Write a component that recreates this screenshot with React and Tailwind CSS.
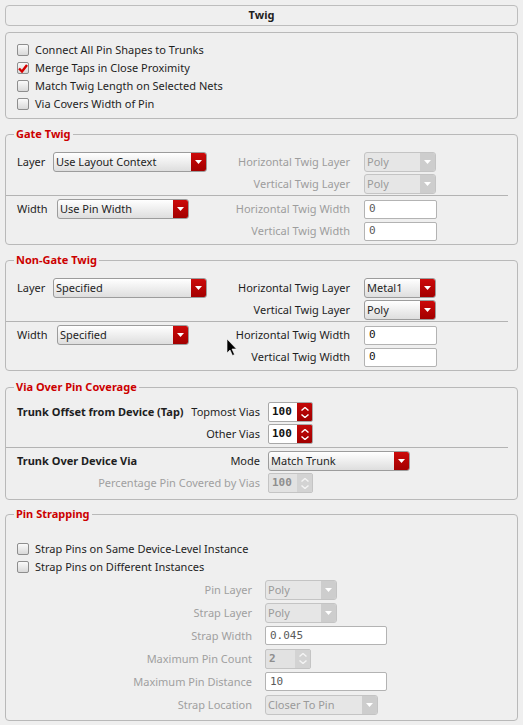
import React from "react";

function Arrow({ color = "#ffffff" }) {
  return (
    <svg width="7" height="4" viewBox="0 0 7 4">
      <polygon points="0,0 7,0 3.5,4" fill={color} />
    </svg>
  );
}

function Combo({ value, w, disabled }) {
  return (
    <div
      className={`h-[20px] flex items-stretch rounded-[3px] border overflow-hidden ${
        disabled
          ? "border-[#c4c4c4] bg-[#e6e6e6] text-[#9a9a9a]"
          : "border-[#9c9c9c] bg-gradient-to-b from-[#ffffff] to-[#dedede] text-[#1e1e1e]"
      }`}
      style={{ width: w }}
    >
      <div className="flex-1 pl-[2px] flex items-center whitespace-nowrap overflow-hidden">{value}</div>
      <div
        className={`w-[15px] flex items-center justify-center ${
          disabled ? "bg-[#cdcdcd]" : "bg-gradient-to-b from-[#cc0a0a] to-[#a30000]"
        }`}
      >
        <Arrow />
      </div>
    </div>
  );
}

function Field({ value, w, dim }) {
  return (
    <div
      className={`h-[19px] flex items-center pl-[4px] bg-white border border-[#b3b3b3] rounded-[2px] font-['DejaVu_Sans_Mono',monospace] text-[11px] ${
        dim ? "text-[#5a5a5a]" : "text-[#111]"
      }`}
      style={{ width: w }}
    >
      {value}
    </div>
  );
}

function Spin({ value, w = 45, disabled }) {
  const c = disabled ? "#f4f4f4" : "#ffffff";
  return (
    <div
      className={`h-[20px] flex items-stretch rounded-[2px] border overflow-hidden ${
        disabled ? "border-[#c4c4c4] bg-[#e2e2e2] text-[#8e8e8e]" : "border-[#a8a8a8] bg-white text-[#111]"
      }`}
      style={{ width: w }}
    >
      <div className="flex-1 pl-[3px] flex items-center font-['DejaVu_Sans_Mono',monospace] text-[11px] font-bold">
        {value}
      </div>
      <div
        className={`w-[15px] flex flex-col items-center justify-center gap-[3px] ${
          disabled ? "bg-[#d3d3d3]" : "bg-gradient-to-b from-[#c40808] to-[#a00000]"
        }`}
      >
        <svg width="8" height="4" viewBox="0 0 8 4">
          <polyline points="0.5,3.5 4,0.5 7.5,3.5" fill="none" stroke={c} strokeWidth="1.4" />
        </svg>
        <svg width="8" height="4" viewBox="0 0 8 4">
          <polyline points="0.5,0.5 4,3.5 7.5,0.5" fill="none" stroke={c} strokeWidth="1.4" />
        </svg>
      </div>
    </div>
  );
}

function Check({ label, checked }) {
  return (
    <div className="h-[18px] pl-[11px] flex items-center gap-[6px]">
      <div className="w-[12px] h-[12px] rounded-[2px] border border-[#8e8e8e] bg-gradient-to-b from-[#fafafa] to-[#d9d9d9] flex items-center justify-center">
        {checked && (
          <svg width="10" height="9" viewBox="0 0 10 9">
            <polyline points="1,4.5 4,7.5 9,1" fill="none" stroke="#d40000" strokeWidth="2.4" />
          </svg>
        )}
      </div>
      <span>{label}</span>
    </div>
  );
}

function Group({ title, className, children }) {
  return (
    <div className={`relative border border-[#b9b9b9] rounded-[4px] ${className}`}>
      <span className="absolute -top-[8px] left-[8px] px-[2px] bg-[#efefef] text-[#cc0000] font-bold leading-[14px]">
        {title}
      </span>
      {children}
    </div>
  );
}

function Sep({ className = "" }) {
  return <div className={`h-px bg-[#b3b3b3] mr-[9px] ${className}`} />;
}

function TwigRow({ label, labelW, combo, comboW, right, rightDim, control }) {
  return (
    <div className="h-[22px] pl-[11px] flex items-center">
      <div className="w-[198px] flex items-center">
        {label && (
          <>
            <span style={{ width: labelW }}>{label}</span>
            <Combo value={combo} w={comboW} />
          </>
        )}
      </div>
      <div className={`w-[135px] text-right whitespace-nowrap ${rightDim ? "text-[#9d9d9d]" : ""}`}>{right}</div>
      <div className="ml-[14px]">{control}</div>
    </div>
  );
}

function ViaRow({ bold, label, dim, control }) {
  return (
    <div className="h-[22px] pl-[11px] flex items-center">
      <div className="w-[243px] flex items-center justify-between whitespace-nowrap">
        <span className="font-bold">{bold}</span>
        <span className={dim ? "text-[#a0a0a0]" : ""}>{label}</span>
      </div>
      <div className="ml-[8px]">{control}</div>
    </div>
  );
}

function StrapRow({ label, control }) {
  return (
    <div className="h-[23px] pl-[11px] flex items-center">
      <div className="w-[235px] text-right text-[#a0a0a0] whitespace-nowrap">{label}</div>
      <div className="ml-[13px]">{control}</div>
    </div>
  );
}

export default function App() {
  return (
    <div className="relative min-h-screen bg-[#efefef] px-[5px] pt-[5px] pb-[4px] font-['Noto_Sans',sans-serif] text-[11px] text-[#1e1e1e] leading-[14px]">
      <div className="h-[21px] pb-[1px] border border-[#bdbdbd] rounded-[4px] flex items-center justify-center font-bold">
        Twig
      </div>

      <div className="mt-[6px] border border-[#b9b9b9] rounded-[4px] pt-[8px] pb-[5px]">
        <Check label="Connect All Pin Shapes to Trunks" />
        <Check label="Merge Taps in Close Proximity" checked />
        <Check label="Match Twig Length on Selected Nets" />
        <Check label="Via Covers Width of Pin" />
      </div>

      <Group title="Gate Twig" className="mt-[15px] pt-[16px] pb-[2px]">
        <TwigRow
          label="Layer"
          labelW={36}
          combo="Use Layout Context"
          comboW={154}
          right="Horizontal Twig Layer"
          rightDim
          control={<Combo value="Poly" w={72} disabled />}
        />
        <TwigRow right="Vertical Twig Layer" rightDim control={<Combo value="Poly" w={72} disabled />} />
        <Sep className="mb-[2px]" />
        <TwigRow
          label="Width"
          labelW={40}
          combo="Use Pin Width"
          comboW={132}
          right="Horizontal Twig Width"
          rightDim
          control={<Field value="0" w={73} dim />}
        />
        <TwigRow right="Vertical Twig Width" rightDim control={<Field value="0" w={73} dim />} />
      </Group>

      <Group title="Non-Gate Twig" className="mt-[15px] pt-[16px] pb-[2px]">
        <TwigRow
          label="Layer"
          labelW={36}
          combo="Specified"
          comboW={154}
          right="Horizontal Twig Layer"
          control={<Combo value="Metal1" w={72} />}
        />
        <TwigRow right="Vertical Twig Layer" control={<Combo value="Poly" w={72} />} />
        <Sep className="mb-[2px]" />
        <TwigRow
          label="Width"
          labelW={40}
          combo="Specified"
          comboW={132}
          right="Horizontal Twig Width"
          control={<Field value="0" w={73} />}
        />
        <TwigRow right="Vertical Twig Width" control={<Field value="0" w={73} />} />
      </Group>

      <Group title="Via Over Pin Coverage" className="mt-[16px] pt-[13px] pb-[5px]">
        <ViaRow bold="Trunk Offset from Device (Tap)" label="Topmost Vias" control={<Spin value="100" />} />
        <ViaRow label="Other Vias" control={<Spin value="100" />} />
        <Sep className="mt-[2px] mb-[2px]" />
        <ViaRow bold="Trunk Over Device Via" label="Mode" control={<Combo value="Match Trunk" w={142} />} />
        <ViaRow label="Percentage Pin Covered by Vias" dim control={<Spin value="100" disabled />} />
      </Group>

      <Group title="Pin Strapping" className="mt-[14px] pt-[25px] pb-[4px]">
        <Check label="Strap Pins on Same Device-Level Instance" />
        <Check label="Strap Pins on Different Instances" />
        <div className="mt-[2px]">
          <StrapRow label="Pin Layer" control={<Combo value="Poly" w={72} disabled />} />
          <StrapRow label="Strap Layer" control={<Combo value="Poly" w={72} disabled />} />
          <StrapRow label="Strap Width" control={<Field value="0.045" w={122} dim />} />
          <StrapRow label="Maximum Pin Count" control={<Spin value="2" w={46} disabled />} />
          <StrapRow label="Maximum Pin Distance" control={<Field value="10" w={122} dim />} />
          <StrapRow label="Strap Location" control={<Combo value="Closer To Pin" w={113} disabled />} />
        </div>
      </Group>

      <svg className="absolute left-[227px] top-[339px]" width="10" height="17" viewBox="0 0 10 17">
        <polygon points="0,0 0,14 3,11 5.5,16.5 7.5,15.5 5,10 9.5,10" fill="#000" stroke="#fff" strokeWidth="0.6" />
      </svg>
    </div>
  );
}
